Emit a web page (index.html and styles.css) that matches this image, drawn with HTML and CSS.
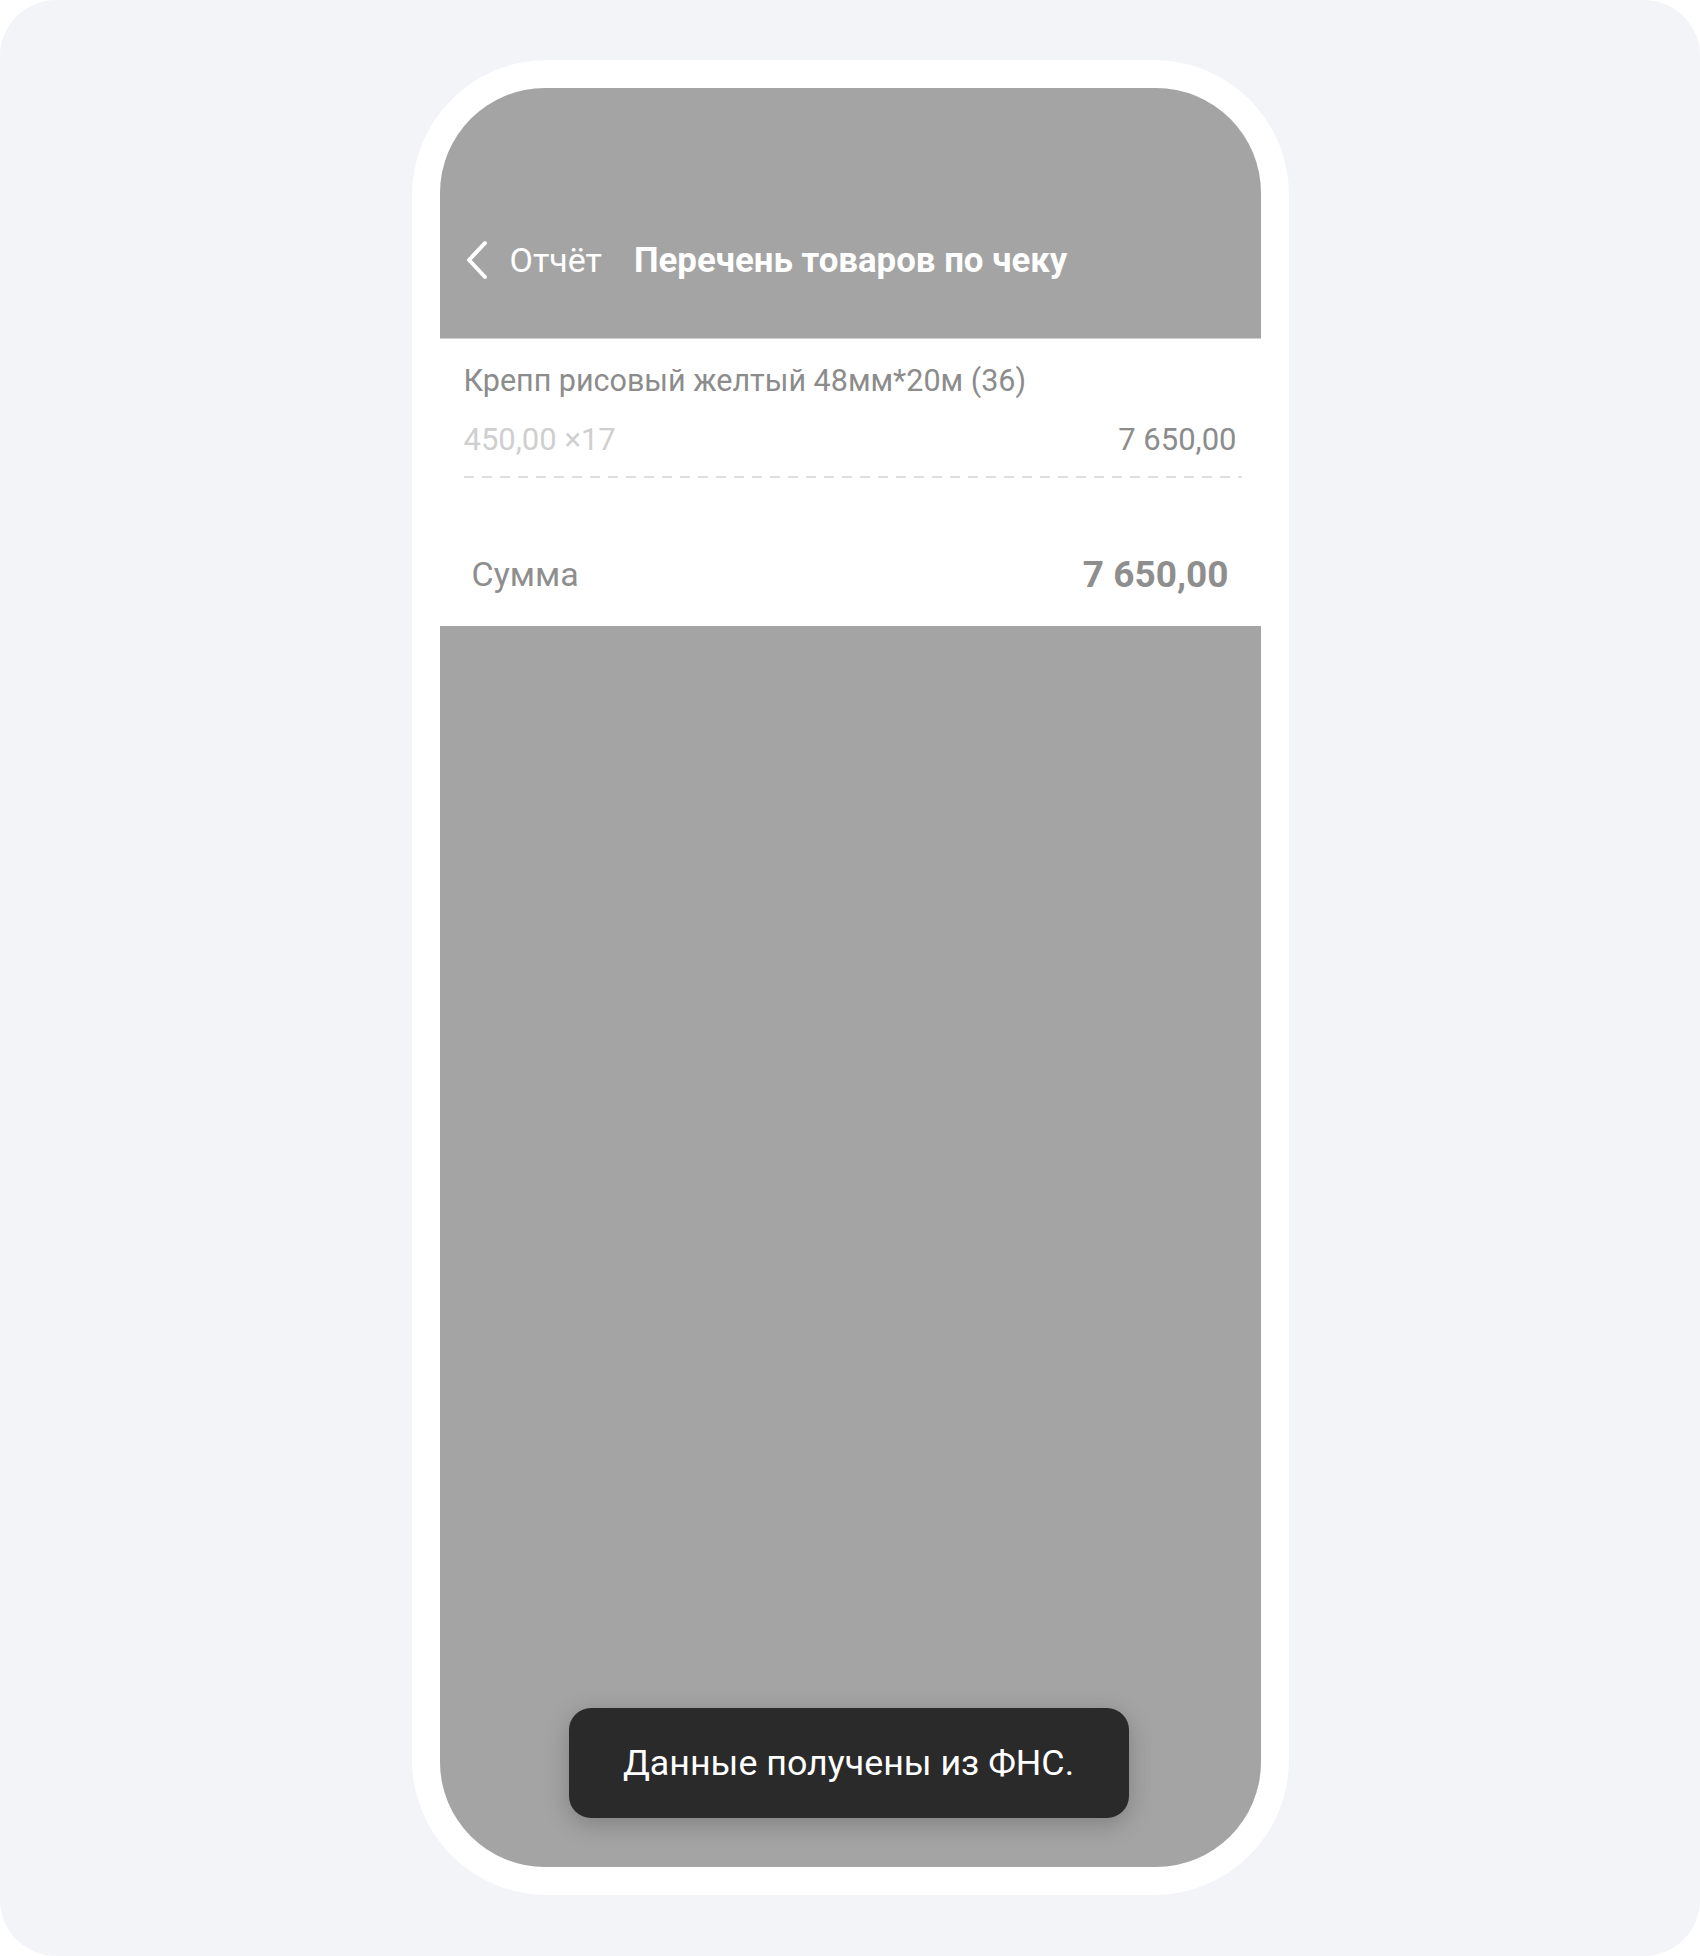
FILE: index.html
```html
<!DOCTYPE html>
<html lang="ru">
<head>
    <meta charset="UTF-8">
    <meta name="viewport" content="width=device-width, initial-scale=1.0">
    <title>Перечень товаров по чеку</title>
    <link rel="stylesheet" href="styles.css">
</head>
<body>
    <div class="canvas">
        <div class="phone">
            <div class="screen">
                <div class="header">
                    <div class="nav">
                        <a class="back" href="#">
                            <svg class="chevron" width="24" height="40" viewBox="0 0 24 40">
                                <polyline points="20,3 4,20 20,37" fill="none" stroke="#fff" stroke-width="4" stroke-linecap="round" stroke-linejoin="round"/>
                            </svg>
                            <span>Отчёт</span>
                        </a>
                        <div class="title">Перечень товаров по чеку</div>
                    </div>
                </div>

                <div class="receipt">
                    <div class="item">
                        <div class="item-name">Крепп рисовый желтый 48мм*20м (36)</div>
                        <div class="item-row">
                            <span class="item-qty">450,00 ×17</span>
                            <span class="item-total">7 650,00</span>
                        </div>
                        <div class="dashes"></div>
                    </div>
                    <div class="sum">
                        <span class="sum-label">Сумма</span>
                        <span class="sum-value">7 650,00</span>
                    </div>
                </div>

                <div class="toast">Данные получены из ФНС.</div>
            </div>
        </div>
    </div>
</body>
</html>
```

FILE: styles.css
```css
body {
    margin: 0;
    background: #fff;
    font-family: Roboto, "Liberation Sans", sans-serif;
}
.canvas {
    width: 1700px;
    height: 1956px;
    background: #f3f4f8;
    border-radius: 56px;
    display: flex;
    justify-content: center;
    padding-top: 60px;
    box-sizing: border-box;
}
.phone {
    width: 877px;
    height: 1835px;
    background: #fff;
    border-radius: 135px;
    padding: 28px;
    box-sizing: border-box;
}
.screen {
    position: relative;
    height: 100%;
    background: #a4a4a4;
    border-radius: 105px;
    overflow: hidden;
    display: flex;
    flex-direction: column;
}
.header {
    height: 250px;
    padding: 147px 0 0 25px;
    box-sizing: border-box;
}
.nav {
    height: 50px;
    display: flex;
    align-items: center;
}
.back {
    display: flex;
    align-items: center;
    color: #fff;
    text-decoration: none;
    font-size: 34px;
    line-height: 34px;
}
.chevron {
    margin-right: 21px;
}
.title {
    margin-left: 32px;
    color: #fff;
    font-size: 34.8px;
    line-height: 34px;
    font-weight: 700;
}
.receipt {
    background: #fff;
    border-top: 1px solid #cdcdcd;
}
.item {
    padding: 22px 19px 0 24px;
}
.item-name {
    font-size: 30.5px;
    line-height: 40px;
    color: #8c8c8c;
}
.item-row {
    display: flex;
    justify-content: space-between;
    margin-top: 19px;
    padding-right: 5px;
    font-size: 31px;
    line-height: 40px;
}
.item-qty {
    color: #cfcfcf;
}
.item-total {
    color: #8c8c8c;
}
.dashes {
    height: 2px;
    margin-top: 16px;
    background-image: linear-gradient(to right, #dedede 55%, transparent 0%);
    background-size: 18px 2px;
}
.sum {
    display: flex;
    justify-content: space-between;
    align-items: center;
    padding: 74px 32px 30px 32px;
    height: 44px;
    color: #8e8e8e;
}
.sum-label {
    font-size: 34px;
}
.sum-value {
    font-size: 37px;
    font-weight: 700;
}
.toast {
    position: absolute;
    left: 129px;
    bottom: 49px;
    width: 560px;
    height: 110px;
    border-radius: 22px;
    background: #2a2a2a;
    color: #fff;
    font-size: 35.8px;
    display: flex;
    align-items: center;
    justify-content: center;
    box-shadow: 0 6px 24px rgba(0, 0, 0, 0.22);
}
```
